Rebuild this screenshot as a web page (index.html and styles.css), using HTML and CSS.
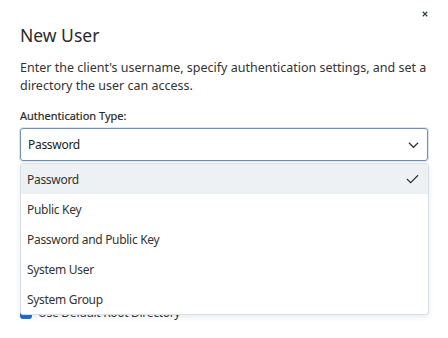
FILE: index.html
```html
<!DOCTYPE html>
<html lang="en">
<head>
<meta charset="UTF-8" />
<title>New User</title>
<link rel="stylesheet" href="styles.css">
</head>
<body>

<div class="dialog">
  <button class="close-btn" aria-label="Close">
    <svg viewBox="0 0 8 8" xmlns="http://www.w3.org/2000/svg">
      <path d="M1 1 L7 7 M7 1 L1 7" />
    </svg>
  </button>

  <h1 class="dialog-title">New User</h1>
  <p class="dialog-desc">Enter the client's username, specify authentication settings, and set a directory the user can access.</p>

  <div class="field">
    <label class="field-label">Authentication Type:</label>
    <div class="select-wrap">
      <div class="select-box">
        <span>Password</span>
        <svg class="chevron" viewBox="0 0 12 8" xmlns="http://www.w3.org/2000/svg">
          <path d="M1 1.5 L6 6.5 L11 1.5" />
        </svg>
      </div>

      <!-- menu aperto sopra il resto del form -->
      <ul class="select-menu">
        <li class="option selected">
          <span>Password</span>
          <svg class="check" viewBox="0 0 14 10" xmlns="http://www.w3.org/2000/svg">
            <path d="M1 5 L5 9 L13 1" />
          </svg>
        </li>
        <li class="option">Public Key</li>
        <li class="option">Password and Public Key</li>
        <li class="option">System User</li>
        <li class="option">System Group</li>
      </ul>
    </div>
  </div>

  <div class="check-row">
    <span class="checkbox"></span>
    <span>Use Default Root Directory</span>
  </div>
</div>

</body>
</html>
```

FILE: styles.css
```css
body {
  margin: 0;
  background: #fff;
  font-family: "Noto Sans", sans-serif;
  color: #333;
}

.dialog {
  position: relative;
  padding: 23px 20px 0 20px;
}

.close-btn {
  position: absolute;
  top: 9px;
  right: 18px;
  width: 10px;
  height: 10px;
  padding: 0;
  border: none;
  background: transparent;
  cursor: pointer;
}

.close-btn svg {
  width: 6px;
  height: 6px;
  stroke: #2d3b48;
  stroke-width: 1.5;
  display: block;
  margin: 2px;
}

.dialog-title {
  margin: 0;
  font-size: 17.5px;
  font-weight: 400;
  line-height: 24px;
  color: #2b2b2b;
}

.dialog-desc {
  margin: 12px 0 0 0;
  font-size: 12.5px;
  line-height: 18px;
  color: #333;
}

.field {
  margin-top: 13px;
}

.field-label {
  display: block;
  font-size: 11px;
  font-weight: 400;
  line-height: 16px;
  color: #2a2a2a;
  margin-bottom: 4px;
  -webkit-text-stroke: 0.2px #2a2a2a;
}

.select-wrap {
  position: relative;
}

.select-box {
  display: flex;
  align-items: center;
  justify-content: space-between;
  height: 33px;
  box-sizing: border-box;
  padding: 0 8px 0 7px;
  border: 1px solid #6d8fbf;
  border-radius: 3px;
  box-shadow: 0 0 0 1px rgba(120, 155, 205, 0.25);
  font-size: 12px;
  letter-spacing: -0.3px;
  color: #222;
}

.chevron {
  width: 11px;
  height: 8px;
  fill: none;
  stroke: #333;
  stroke-width: 1.3;
}

.select-menu {
  position: absolute;
  top: 35px;
  left: 0;
  right: -1px;
  margin: 0;
  padding: 0;
  list-style: none;
  background: #fff;
  border: 1px solid #d7dfe8;
  border-radius: 3px;
  box-shadow: 0 2px 5px rgba(60, 80, 110, 0.12);
  z-index: 2;
}

.option {
  display: flex;
  align-items: center;
  justify-content: space-between;
  height: 30px;
  padding: 0 9px 0 6px;
  font-size: 12px;
  letter-spacing: -0.3px;
  color: #333;
}

.option.selected {
  background: #edf1f4;
}

.check {
  width: 13px;
  height: 10px;
  fill: none;
  stroke: #333;
  stroke-width: 1.3;
}

.check-row {
  display: flex;
  align-items: center;
  gap: 6px;
  margin-top: 143px;
  font-size: 12px;
  letter-spacing: -0.3px;
  color: #333;
}

.checkbox {
  width: 12px;
  height: 12px;
  border-radius: 3px;
  background: #1d6ad3;
}
```
